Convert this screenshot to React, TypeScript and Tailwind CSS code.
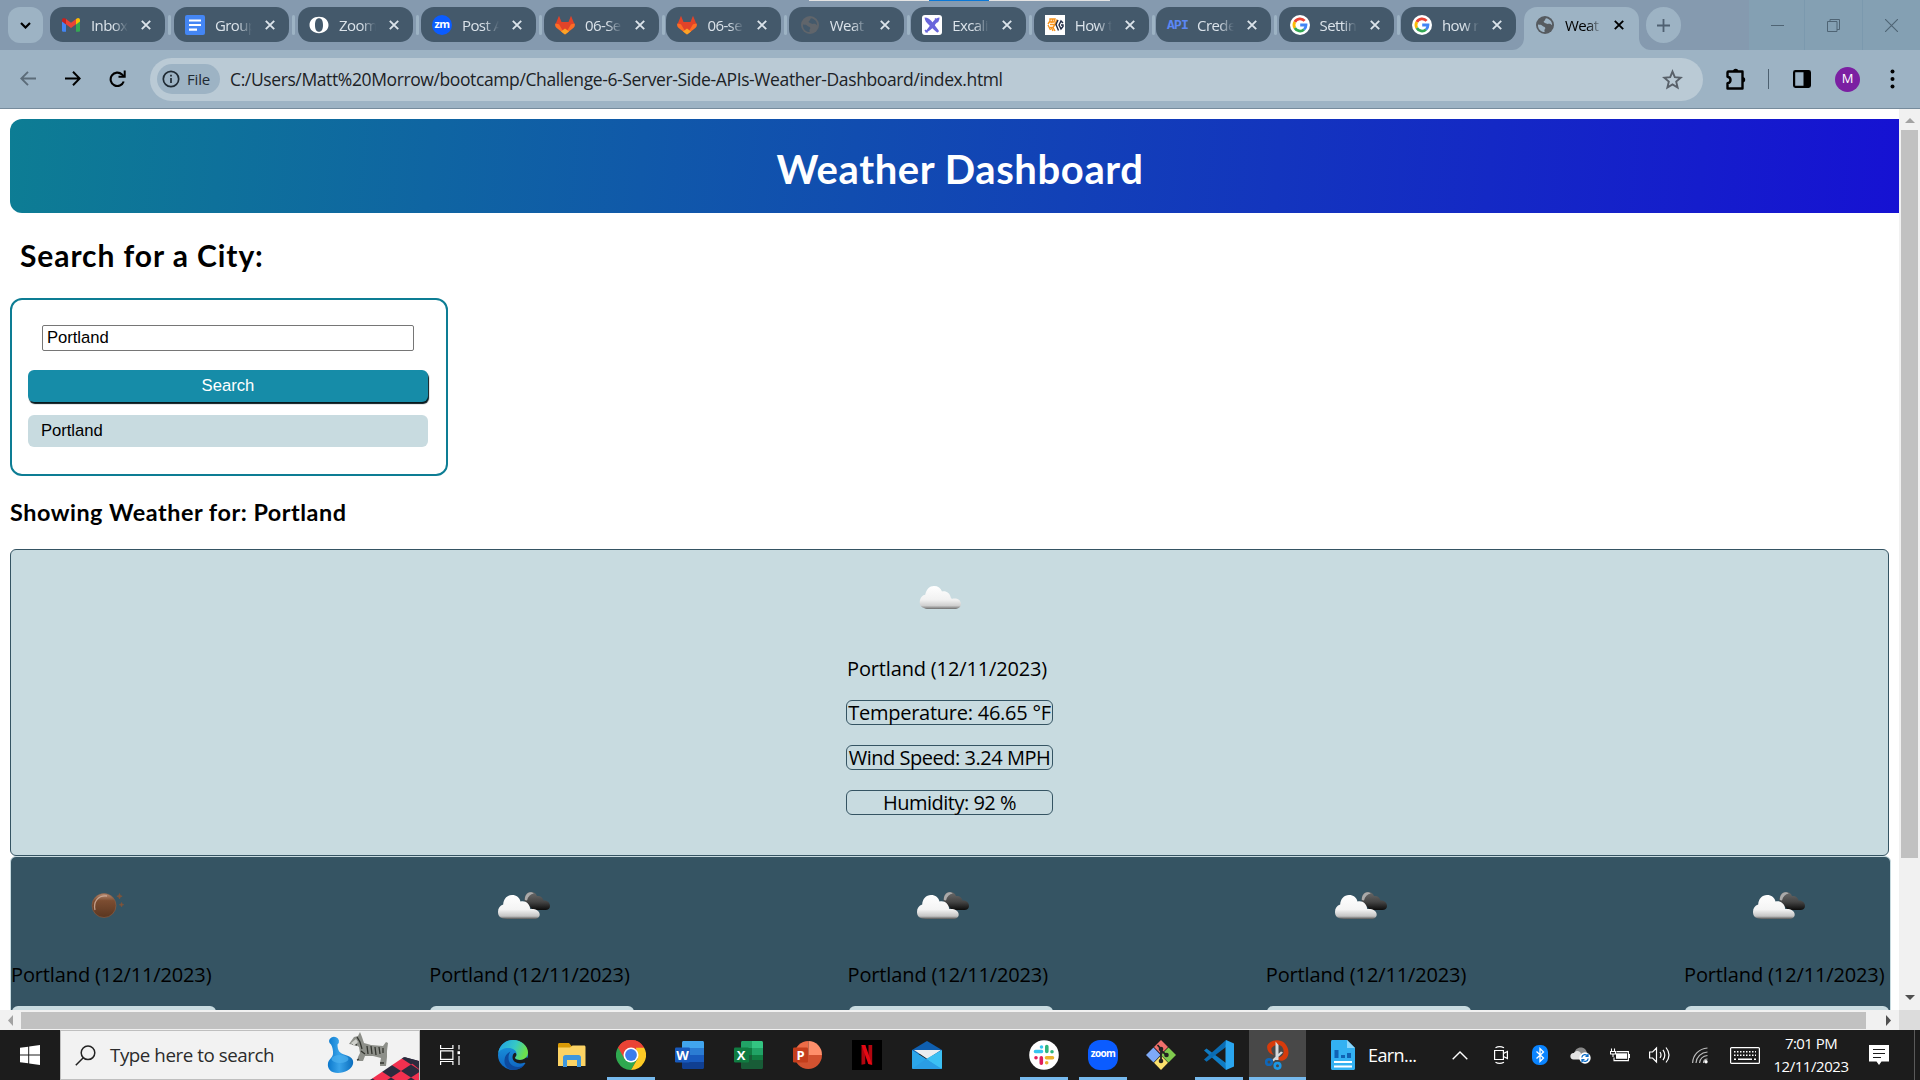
import React from "react";

type IconProps = { className?: string };

/* ---------- favicons ---------- */

const Gmail = () => (
  <svg className="size-5 shrink-0" viewBox="0 0 20 20">
    <path d="M1 5v10.500a1.200 1.200 0 0 0 1.200 1.200H5V8z" fill="#4285f4" />
    <path d="M15 8v8.700h2.800a1.200 1.200 0 0 0 1.200-1.200V5z" fill="#34a853" />
    <path d="M15 4.200V9.500l4-3V5c0-1.900-2-2.600-3.300-1.500z" fill="#fbbc04" />
    <path d="M5 9.300V4l5 3.800L15 4v5.300L10 13z" fill="#ea4335" />
    <path d="M1 5v1.500l4 3V4.100l-.7-.6C3 2.400 1 3.100 1 5z" fill="#c5221f" />
  </svg>
);

const Docs = () => (
  <svg className="size-5 shrink-0" viewBox="0 0 20 20">
    <rect width="20" height="20" rx="2" fill="#4486f4" />
    <path d="M4 5.500h12M4 10h12M4 14.700h8" stroke="#fff" strokeWidth="2.200" />
  </svg>
);

const BigO = () => (
  <svg className="size-5 shrink-0" viewBox="0 0 20 20">
    <path
      fillRule="evenodd"
      fill="#fff"
      d="M10 1.800c5.500 0 9.500 3.500 9.500 8.200s-4 8.200-9.500 8.200S.5 14.700.5 10s4-8.200 9.500-8.200zm0 1.400c-2.700 0-4 2.600-4 6.800s1.300 6.800 4 6.800 4-2.600 4-6.800-1.300-6.800-4-6.800z"
    />
  </svg>
);

const ZoomMail = () => (
  <span className="flex size-5 shrink-0 items-center justify-center rounded-full bg-[#0b5cff] pb-0.5 font-['Open_Sans',sans-serif] text-[11px] font-bold leading-none tracking-[-0.5px] text-white">
    zm
  </span>
);

const GitLab = () => (
  <svg className="size-5 shrink-0" viewBox="0 0 20 20">
    <path d="M4 .8 6.500 7h7L16 .8l3.500 8.500L10 19.500.5 9.300z" fill="#e24329" />
    <path d="M.3 8.500 4 9.300 10 19.400 2 13.300C.3 12-.2 10.300.3 8.500zM19.700 8.500 16 9.300 10 19.400l8-6.100c1.700-1.300 2.200-3 1.700-4.800z" fill="#fc6d26" />
    <path d="m10 19.600-4-3.100 4-3 4 3z" fill="#fca326" />
  </svg>
);

const Globe = ({ color, hole }: { color: string; hole: string }) => (
  <svg className="size-5 shrink-0" viewBox="0 0 20 20">
    <circle cx="10" cy="10" r="9" fill={color} />
    <path
      d="M11 3.200c-1.300.8-.4 2-1.600 2.600-1 .5-1 1.500.2 2 1.700.7 2.300 1.300 3.900 1 1.500-.3 2.600.2 3.600 1.500.3-3.300-2-6.400-6.100-7.100zM3 9.500c2 .2 3.600.3 4.600 1.500.8 1 2.500.6 2.700 2 .1 1-1 1.500-.9 2.600.1.700.2 1 .3 1.500C5.600 17 2.500 13.500 3 9.500z"
      fill={hole}
    />
  </svg>
);

const Excalidraw = () => (
  <svg className="size-5 shrink-0" viewBox="0 0 20 20">
    <rect width="20" height="20" rx="3" fill="#fff" />
    <path d="M2.500 2.500c3.500 0 5.500 1.500 8 4.800l6.200 8.200c.6 1-.9 2.500-1.900 1.800C11.500 14.500 9 12 6.500 9.500 4.500 7.500 2.800 5.500 2.500 2.500z" fill="#6965db" />
    <path d="M17.500 2.500c-3.800.2-6.500 4-8.500 6.900C7 12 5 14 2.800 17.500c4-.8 6.800-3 9-6 1.600-2.300 1.800-3 4-4.600 1.300-1 1.700-2.500 1.700-4.400z" fill="#6965db" />
    <path d="m3 15 2.500 2.500M13 3.500 16 7" stroke="#6965db" strokeWidth="1.500" />
  </svg>
);

const Hexagons = () => (
  <svg className="size-5 shrink-0" viewBox="0 0 20 20">
    <rect width="20" height="20" fill="#fff" />
    <g fill="none" strokeWidth="1.400">
      <path d="M5 4h5L9 7H5zM8 4l-1.500 4M12 4.500 10 9M3 9l2-3M3 10l2.500 5M5 9.500h5l-2 3H5M8 12.500 10 16M6 12l2 4" stroke="#f7941d" />
      <path d="m13 5-2 4.500 2.500 6M18 8l-2-2-2 4 2 4 2-2.500v-1.500h-2" stroke="#1f2a44" />
    </g>
  </svg>
);

const ApiMark = () => (
  <span className="flex size-5 shrink-0 items-center pt-0.5 font-['Liberation_Mono',monospace] text-[13px] font-bold leading-none tracking-[-0.9px] text-[#5b87f5]">
    API
  </span>
);

const Google = () => (
  <svg className="size-5 shrink-0" viewBox="0 0 20 20">
    <circle cx="10" cy="10" r="10" fill="#fff" />
    <g fill="none" strokeWidth="2.800">
      <path d="M14.600 5.900A6 6 0 0 0 4.800 7" stroke="#ea4335" />
      <path d="M4.800 7a6 6 0 0 0 0 6" stroke="#fbbc05" />
      <path d="M4.800 13a6 6 0 0 0 9.200 1.500" stroke="#34a853" />
      <path d="M14 14.500A6 6 0 0 0 16 10h-5.800" stroke="#4285f4" />
    </g>
  </svg>
);

const Close = ({ className }: IconProps) => (
  <svg className={className} viewBox="0 0 10 10">
    <path d="m.8.8 8.400 8.400M9.200.8.800 9.200" stroke="currentColor" strokeWidth="1.900" />
  </svg>
);

const tabs = [
  { title: "Inbox", icon: <Gmail />, w: "w-[124px]" },
  { title: "Group", icon: <Docs />, w: "w-[124px]" },
  { title: "Zoom", icon: <BigO />, w: "w-[123px]" },
  { title: "Post A", icon: <ZoomMail />, w: "w-[123px]" },
  { title: "06-Se", icon: <GitLab />, w: "w-[122.430px]" },
  { title: "06-se", icon: <GitLab />, w: "w-[122.430px]" },
  { title: "Weat", icon: <Globe color="#60656b" hole="#44596b" />, w: "w-[122.430px]" },
  { title: "Excali", icon: <Excalidraw />, w: "w-[122.430px]" },
  { title: "How t", icon: <Hexagons />, w: "w-[122.430px]" },
  { title: "Crede", icon: <ApiMark />, w: "w-[122.430px]" },
  { title: "Settin", icon: <Google />, w: "w-[122.430px]" },
  { title: "how r", icon: <Google />, w: "w-[123px]" },
];

const TabTitle = ({ children }: { children: React.ReactNode }) => (
  <span className="ml-2.5 w-[37px] shrink-0 overflow-hidden whitespace-nowrap text-[15px] leading-5 tracking-[-0.6px] [mask-image:linear-gradient(to_right,black_60%,transparent)]">
    {children}
  </span>
);

function TabStrip() {
  return (
    <div className="relative flex h-[50px] shrink-0 bg-[#859aaf]">
      <div className="absolute left-[809px] top-0 flex h-px w-[301px] bg-[#e4e4e4]">
        <div className="ml-[120px] w-[60px] bg-[#0a78d7]" />
      </div>
      <div className="ml-2 mt-[7px] flex h-9 w-[35px] items-center justify-center rounded-xl bg-[#9db3c4]">
        <svg className="h-[7px] w-[11px]" viewBox="0 0 11 7">
          <path d="m1 1 4.500 4.500L10 1" fill="none" stroke="#000" strokeWidth="2.200" />
        </svg>
      </div>
      <div className="ml-[7px] mt-[7px] flex h-[35px]">
        {tabs.map((t, i) => (
          <div key={i} className={"flex shrink-0 items-center " + t.w}>
            <div className="flex h-[35px] w-[115px] items-center rounded-[13px] bg-[#44596b] pl-[11px] text-[#dbe3ea]">
              {t.icon}
              <TabTitle>{t.title}</TabTitle>
              <Close className="ml-[13px] size-2.5 text-[#dbe3ea]" />
            </div>
            {i < 11 && <div className="ml-[3px] h-5 w-[3px] rounded-full bg-[#9db3c4]" />}
          </div>
        ))}
      </div>
      <div className="relative mt-[7px] flex h-[43px] w-[115px] rounded-t-[13px] bg-[#9db3c4] pl-[11px] pt-2 text-black">
        <svg className="absolute -left-3 bottom-0 size-3" viewBox="0 0 12 12">
          <path d="M12 0v12H0A12 12 0 0 0 12 0z" fill="#9db3c4" />
        </svg>
        <svg className="absolute -right-3 bottom-0 size-3" viewBox="0 0 12 12">
          <path d="M0 0v12h12A12 12 0 0 1 0 0z" fill="#9db3c4" />
        </svg>
        <Globe color="#565b60" hole="#9db3c4" />
        <TabTitle>Weat</TabTitle>
        <Close className="ml-3 mt-[5px] size-2.5" />
      </div>
      <div className="ml-[7px] mt-[7px] flex h-9 w-[35px] items-center justify-center rounded-full bg-[#9db3c4]">
        <svg className="size-[13px]" viewBox="0 0 13 13">
          <path d="M6.500 0v13M0 6.500h13" stroke="#4f6071" strokeWidth="1.800" />
        </svg>
      </div>
      <div className="ml-auto flex h-full w-[171px] bg-[#84a0b3] text-[#4f6474]">
        <div className="flex w-14 items-center justify-center border-r border-[#7b99ae]">
          <div className="ml-0.5 h-px w-[13px] bg-current" />
        </div>
        <div className="flex w-[58px] items-center justify-center border-r border-[#7b99ae]">
          <svg className="size-[13px]" viewBox="0 0 13 13">
            <path d="M.5 2.500h9.500v10H.500zM3 2.500V.5h9.500v10H10" fill="none" stroke="currentColor" />
          </svg>
        </div>
        <div className="flex flex-1 items-center justify-center">
          <svg className="size-[13px]" viewBox="0 0 13 13">
            <path d="m0 0 13 13M13 0 0 13" stroke="currentColor" strokeWidth="1.100" />
          </svg>
        </div>
      </div>
    </div>
  );
}

function Toolbar() {
  return (
    <div className="flex h-[59px] shrink-0 items-start border-b border-[#768b9c] bg-[#9db3c4] pt-2">
      <div className="flex h-[43px] w-[150px] items-center pb-0.5 pl-5">
        <svg className="h-[15px] w-4" viewBox="0 0 16 15">
          <path d="M16 7.500H1.500M8 .8 1.300 7.500 8 14.200" fill="none" stroke="#5c6c79" strokeWidth="1.900" />
        </svg>
        <svg className="ml-[29px] h-[15px] w-4" viewBox="0 0 16 15">
          <path d="M0 7.500h14.500M8 .8l6.700 6.700L8 14.200" fill="none" stroke="#000" strokeWidth="2" />
        </svg>
        <svg className="ml-7 h-[18px] w-[17px]" viewBox="0 0 17 18">
          <path d="M14.700 11.500A6.700 6.700 0 1 1 13 4.500l2 2" fill="none" stroke="#000" strokeWidth="2.100" />
          <path d="M16.700.5v7.200H9.500V5.700h5.200V.5z" fill="#000" />
        </svg>
      </div>
      <div className="flex h-[43px] w-[1553px] items-center rounded-full bg-[#bacad5] pb-px pl-[7px] pr-5">
        <div className="flex h-[30px] w-[63px] items-center rounded-full bg-[#9db3c4] pl-[5px]">
          <svg className="size-[18px]" viewBox="0 0 18 18">
            <circle cx="9" cy="9" r="7.700" fill="none" stroke="#1f2a33" strokeWidth="1.700" />
            <path d="M9 8v5M9 4.800v1.800" stroke="#1f2a33" strokeWidth="1.700" />
          </svg>
          <span className="ml-[7px] text-[15px] leading-5 tracking-[-0.2px] text-[#1f2a33]">File</span>
        </div>
        <span className="ml-2.5 whitespace-nowrap text-[17.500px] leading-6 tracking-[-0.385px] text-[#1c2226]">
          C:/Users/Matt%20Morrow/bootcamp/Challenge-6-Server-Side-APIs-Weather-Dashboard/index.html
        </span>
        <svg className="ml-auto size-[21px]" viewBox="0 0 21 21">
          <path
            d="m10.500 2.600 2.300 5.600 6 .5-4.600 3.900 1.400 5.900-5.100-3.100-5.100 3.100 1.400-5.900-4.600-3.900 6-.5z"
            fill="none"
            stroke="#59616a"
            strokeWidth="1.900"
          />
        </svg>
      </div>
      <div className="flex h-[43px] flex-1 items-center pb-px">
        <svg className="ml-[21px] h-[25px] w-6" viewBox="0 0 24 25">
          <path
            d="M4.500 4.500h14v17H3.500v-5.200c4-.6 4-6 0-6.500V5.500a1 1 0 0 1 1-1z"
            fill="none"
            stroke="#000"
            strokeWidth="2.400"
            strokeLinejoin="round"
          />
          <path d="M9 4.500a2.700 2.700 0 0 1 5.400 0zM18.500 10a2.700 2.700 0 0 1 0 5.400z" fill="#000" />
        </svg>
        <div className="ml-5 h-5 w-px bg-[#4c6070]" />
        <svg className="ml-6 h-[18px] w-[18px]" viewBox="0 0 18 18">
          <rect x="1.100" y="1.100" width="15.800" height="15.800" rx="1.300" fill="none" stroke="#000" strokeWidth="2.200" />
          <path d="M10.500 1h6.500v16h-6.500z" fill="#000" />
        </svg>
        <div className="ml-6 flex size-[25px] items-center justify-center rounded-full bg-[#7b1fa2] text-[13px] font-normal text-white">
          M
        </div>
        <svg className="ml-[30px] h-[22px] w-[5px]" viewBox="0 0 5 22">
          <g fill="#000">
            <circle cx="2.500" cy="3.500" r="2" />
            <circle cx="2.500" cy="11" r="2" />
            <circle cx="2.500" cy="18.500" r="2" />
          </g>
        </svg>
      </div>
    </div>
  );
}

/* ---------- weather icons ---------- */

const OvercastLight = () => (
  <svg className="h-[62px] w-[62px]" viewBox="0 0 62 62">
    <defs>
      <linearGradient id="ovl" x1="0" y1="0" x2="0" y2="1">
        <stop offset="0" stopColor="#fff" />
        <stop offset=".6" stopColor="#f1f1f1" />
        <stop offset=".85" stopColor="#cfcfcf" />
        <stop offset="1" stopColor="#6f6f6f" />
      </linearGradient>
    </defs>
    <path
      d="M15 42c-3.500-1-5-4-4-8 .8-3 2.500-4.800 5.200-5.300C17.500 23 20.500 20 25 20c4 0 6.800 2 8 5.500 4-1 8 1.500 8.700 6 .5.200.8.800 1 1.500 4.500-1.500 8.800.5 9.300 4.500 0 2.500-1 4-3.500 5-1 .5-2 .5-3 .5H18c-1 0-2-.5-3-1z"
      fill="url(#ovl)"
    />
  </svg>
);

const BrokenClouds = () => (
  <svg className="h-[62px] w-[62px]" viewBox="0 0 62 62">
    <defs>
      <linearGradient id="bkf" x1="0" y1="0" x2="0" y2="1">
        <stop offset="0" stopColor="#fff" />
        <stop offset=".6" stopColor="#f4f4f4" />
        <stop offset=".88" stopColor="#c4c4c4" />
        <stop offset="1" stopColor="#555" />
      </linearGradient>
      <linearGradient id="bkb" x1="0" y1="0" x2="0" y2="1">
        <stop offset="0" stopColor="#6a6a6a" />
        <stop offset=".55" stopColor="#454545" />
        <stop offset="1" stopColor="#0c0c0c" />
      </linearGradient>
    </defs>
    <path
      d="M31.500 26c-.3-5 2-9 6.500-9 3 0 5 1.500 6 4 3-.6 6 1.500 6.500 4.500 3.500-.5 6.500 2 6.500 5.500 0 2.500-2 4-4.500 4H40z"
      fill="url(#bkb)"
    />
    <path d="M31.800 25c0-4 2-7.500 5.500-7.700 1.500 0 2.500.5 3.500 1.200-3.500.5-5.800 3-6.800 7z" fill="#aaa" />
    <path
      d="M10 43.500c-3.500-.8-5-3.500-5-6.500 0-4 2-6.500 5.200-7.500C10.500 24 14 20 19 20c4.500 0 7.500 2.500 8.500 6.500 5-1.500 9.500 2.500 9.700 7.500 5-.5 9.500 1.500 9.500 5.500 0 2-1 3.400-3.200 4.200-1.500.5-2.500.3-4 .3H14c-1.500 0-2.500-.2-4-.5z"
      fill="url(#bkf)"
    />
  </svg>
);

const ClearNight = () => (
  <svg className="h-[62px] w-[62px]" viewBox="0 0 62 62">
    <defs>
      <linearGradient id="cln" x1="0" y1="0" x2="0" y2="1">
        <stop offset="0" stopColor="#b98d74" />
        <stop offset=".3" stopColor="#7c4d31" />
        <stop offset="1" stopColor="#5a3620" />
      </linearGradient>
    </defs>
    <circle cx="29" cy="30.500" r="12" fill="url(#cln)" stroke="#8f6044" strokeWidth=".6" />
    <path d="M20 35c-2-8 3-15 12-14" fill="none" stroke="#d3b3a1" strokeWidth="1.300" opacity=".8" />
    <path d="m44.500 18.500.8 1.900 1.900.8-1.900.8-.8 1.900-.8-1.900-1.900-.8 1.900-.8zM46.500 27.500l.6 1.600 1.600.6-1.600.6-.6 1.600-.6-1.600-1.600-.6 1.600-.6z" fill="#80543a" stroke="#80543a" strokeWidth=".6" />
  </svg>
);

const forecast = [<ClearNight />, <BrokenClouds />, <BrokenClouds />, <BrokenClouds />, <BrokenClouds />];

const Reading = ({ children }: { children: React.ReactNode }) => (
  <div className="mb-5 flex h-[25px] items-center justify-center whitespace-nowrap rounded-md border border-[#355463] leading-6">
    {children}
  </div>
);

function Dashboard() {
  return (
    <div className="flex min-h-0 flex-1 flex-col overflow-hidden bg-white pl-2.5 font-['Open_Sans',sans-serif] text-xl text-black">
      <header className="mt-2.5 flex h-[94px] w-[1900px] shrink-0 items-center justify-center rounded-xl bg-[linear-gradient(95deg,#0d7d94,#1611d3)] pt-1.5">
        <h1 className="font-['Lato',sans-serif] text-[40px] font-bold leading-[50px] tracking-[0.6px] text-white">
          Weather Dashboard
        </h1>
      </header>
      <h2 className="ml-2.5 mt-6 shrink-0 font-['Lato',sans-serif] text-[30px] font-bold leading-9 tracking-[0.92px]">
        Search for a City:
      </h2>
      <section className="mt-[25px] h-[178px] w-[438px] shrink-0 rounded-xl border-2 border-[#0d7d94] px-4 pt-[25px] font-['Liberation_Sans',Arial,sans-serif] text-[16.670px]">
        <div className="ml-3.5 flex h-[26px] w-[372px] items-center rounded-xs border border-[#767676] pl-1 leading-5 tracking-[-0.05px]">
          Portland
        </div>
        <button className="mt-[19px] block h-8 w-[400px] rounded-md bg-[#168ca8] leading-8 text-white shadow-[1px_2px_1px_#07181c]">
          Search
        </button>
        <div className="mt-[13px] h-8 w-[400px] rounded-md bg-[#c8dbe0] pl-[13px] leading-[31px] tracking-[-0.05px]">Portland</div>
      </section>
      <h3 className="mt-[21px] shrink-0 font-['Lato',sans-serif] text-[23.400px] font-bold leading-[30px] tracking-[0.52px]">
        Showing Weather for: Portland
      </h3>
      <section className="mt-[22px] flex h-[307px] w-[1879px] shrink-0 justify-center rounded-md border border-[#355463] bg-[#c8dbe0]">
        <div className="w-[207px] pt-4">
          <div className="flex w-[188px] justify-center">
            <OvercastLight />
          </div>
          <p className="mb-[19px] ml-px mt-[29px] whitespace-nowrap leading-6 tracking-[-0.15px]">Portland (12/11/2023)</p>
          <Reading>
            <span className="tracking-[-0.25px]">Temperature: 46.65 °F</span>
          </Reading>
          <Reading>
            <span className="tracking-[-0.48px]">Wind Speed: 3.24 MPH</span>
          </Reading>
          <Reading>
            <span className="tracking-[-0.5px]">Humidity: 92 %</span>
          </Reading>
        </div>
      </section>
      <section className="flex h-[400px] w-[1881px] shrink-0 justify-between rounded-md border border-[#c8dbe0] bg-[#355463]">
        {forecast.map((icon, i) => (
          <div key={i} className="w-[206px] pt-[18px]">
            <div className="flex w-[190px] justify-center">{icon}</div>
            <p className="mb-[19px] mt-[26px] whitespace-nowrap leading-6 tracking-[-0.13px]">Portland (12/11/2023)</p>
            <div className="ml-px h-6 w-[204px] rounded-md bg-[#c8dbe0]" />
          </div>
        ))}
      </section>
    </div>
  );
}

const Arrow = ({ className, d, fill }: { className: string; d: string; fill: string }) => (
  <svg className={className} viewBox="0 0 10 10" preserveAspectRatio="none">
    <path d={d} fill={fill} />
  </svg>
);

/* ---------- taskbar icons ---------- */

const Windows = () => (
  <svg className="size-5" viewBox="0 0 20 20">
    <path d="M0 2.800 8.200 1.700v7.800H0zM9.200 1.500 20 0v9.500H9.200zM0 10.500h8.200v7.800L0 17.200zM9.200 10.500H20V20L9.200 18.500z" fill="#fff" />
  </svg>
);

const Edge = () => (
  <svg className="size-[30px]" viewBox="0 0 30 30">
    <defs>
      <linearGradient id="eg1" x1="0" y1="0" x2="1" y2=".3">
        <stop offset="0" stopColor="#1f9fe8" />
        <stop offset=".6" stopColor="#36c8c6" />
        <stop offset="1" stopColor="#6be04d" />
      </linearGradient>
      <linearGradient id="eg2" x1="0" y1="0" x2="0" y2="1">
        <stop offset="0" stopColor="#1b9de2" />
        <stop offset="1" stopColor="#0f62c0" />
      </linearGradient>
      <clipPath id="egc">
        <path d="M0 0h30v17.500l-1.500.5c-1.500 1.500-3.500 2.300-6.500 2l6 3.500-6 6.500H0z" />
      </clipPath>
    </defs>
    <circle cx="15" cy="15" r="15" fill="url(#eg2)" clipPath="url(#egc)" />
    <path d="M.3 13C1.500 5 7.500 0 15 0c8.500 0 15 6 15 12.500 0 4.500-3.500 7.500-8 7.500-3.500 0-5-1.200-5-2.200 0-.8 1.500-1.500 1.500-4C18.500 10.500 15 8 10.500 8 5.500 8 1.800 10 .3 13z" fill="url(#eg1)" />
    <path d="M10.500 18c0 5.500 4.500 9.500 10 9 2.500-.2 5-1.500 6.500-3-2.500 4-7 6.200-12 6C9 29.500 6 25 6.500 20c.3-4 2.500-7 6-8.500-1.200 1.500-2 3.500-2 6.500z" fill="#0d4a9e" />
    <path d="M16.900 17.800c0 1 1.600 2.200 5.100 2.200 3 0 5.300-1.200 6.700-3.200-.3 3-1.200 4.700-2.200 5.700-6 2.500-12-.5-12-5.200 0-2.200 1-4 2.700-4.500.9.500 1.200 1.200 1.200 2.200 0 1.300-1.500 2-1.500 2.800z" fill="#1c1c1c" />
  </svg>
);

const Folder = () => (
  <svg className="h-[25px] w-7" viewBox="0 0 28 25">
    <path d="M0 1.500C0 .7.500 0 1.500 0H11l3 3.500V8H0z" fill="#d99a06" />
    <path d="M0 4.500h12l2.500-2H26c1 0 1.500.6 1.500 1.500V23H0z" fill="#fcd364" />
    <path d="M5 24V14.500C5 13 6 12 7.500 12h13c1.500 0 2.500 1 2.500 2.500V24h-4v-7H9v7z" fill="#3f97dd" />
  </svg>
);

const Chrome = () => (
  <svg className="size-[30px]" viewBox="0 0 30 30">
    <path d="M15 15 2 7.500a15 15 0 0 1 26 0z" fill="#ea4335" />
    <path d="M2 7.500a15 15 0 0 0 13 22.500l6.500-11.300L15 15z" fill="#2fa84f" />
    <path d="M28 7.500a15 15 0 0 1-13 22.500l6.500-11.200L20 7.500z" fill="#fdca25" />
    <path d="M2 7.500 8.500 18.700 15 7.500h13A15 15 0 0 0 2 7.500z" fill="#ea4335" />
    <circle cx="15" cy="15" r="7.500" fill="#fff" />
    <circle cx="15" cy="15" r="5.900" fill="#3b7ded" />
  </svg>
);

const OfficeLetter = ({ children }: { children: string }) => (
  <span className="relative font-['Open_Sans',sans-serif] text-[13px] font-bold leading-none text-white">{children}</span>
);

const Word = () => (
  <div className="relative flex h-7 w-[29px] items-center">
    <svg className="absolute inset-0 size-full" viewBox="0 0 29 28">
      <path d="M7 1.500C7 .6 7.600 0 8.500 0h19c.9 0 1.500.6 1.500 1.500V7H7z" fill="#41a5ee" />
      <path d="M7 7h22v7H7z" fill="#2b7cd3" />
      <path d="M7 14h22v7H7z" fill="#185abd" />
      <path d="M7 21h22v5.500c0 .9-.6 1.500-1.500 1.500h-19c-.9 0-1.500-.6-1.500-1.500z" fill="#103f91" />
      <rect y="6.500" width="15" height="15" rx="1.300" fill="#185abd" />
    </svg>
    <div className="flex w-[15px] justify-center">
      <OfficeLetter>W</OfficeLetter>
    </div>
  </div>
);

const Excel = () => (
  <div className="relative flex h-7 w-[29px] items-center">
    <svg className="absolute inset-0 size-full" viewBox="0 0 29 28">
      <path d="M7 1.500C7 .6 7.600 0 8.500 0H18v7H7z" fill="#21a366" />
      <path d="M18 0h9.500c.9 0 1.500.6 1.500 1.500V7H18z" fill="#33c481" />
      <path d="M7 7h11v7H7z" fill="#107c41" />
      <path d="M18 7h11v7H18z" fill="#21a366" />
      <path d="M18 14h11v5H18z" fill="#107c41" />
      <path d="M7 14h11v5h11v7.500c0 .9-.6 1.500-1.500 1.500h-19c-.9 0-1.500-.6-1.500-1.500z" fill="#185c37" />
      <rect y="6.500" width="15" height="15" rx="1.300" fill="#107c41" />
    </svg>
    <div className="flex w-[15px] justify-center">
      <OfficeLetter>X</OfficeLetter>
    </div>
  </div>
);

const PowerPoint = () => (
  <div className="relative flex h-7 w-[29px] items-center">
    <svg className="absolute inset-0 size-full" viewBox="0 0 29 28">
      <path d="M15.500 0A14 14 0 0 0 1.500 14h14z" fill="#ed6c47" />
      <path d="M15.500 0A13.500 14 0 0 1 29 14H15.500z" fill="#ff8f6b" />
      <path d="M1.500 14a13.750 14 0 0 0 27.500 0z" fill="#d35230" />
      <rect y="6.500" width="15" height="15" rx="1.300" fill="#c43e1c" />
    </svg>
    <div className="flex w-[15px] justify-center">
      <OfficeLetter>P</OfficeLetter>
    </div>
  </div>
);

const Netflix = () => (
  <svg className="size-[30px]" viewBox="0 0 30 30">
    <rect width="30" height="30" fill="#000" />
    <path d="M9.500 5h3.800v19l-3.800.7zM16.500 5h3.700v19.700l-3.700-.7z" fill="#b1060f" />
    <path d="M9.500 5h3.800l6.900 19.700-3.900-.7z" fill="#e50914" />
  </svg>
);

const Mail = () => (
  <svg className="mb-px h-7 w-[30px]" viewBox="0 0 30 28">
    <path d="M0 9 15 0l15 9v4H0z" fill="#0f5fb0" />
    <path d="M2 9h27L15.500 18z" fill="#eceef0" />
    <path d="M0 9 30 28H1.500C.6 28 0 27.500 0 26.500z" fill="#2ba6ea" />
    <path d="M30 9v17.500c0 1-.6 1.500-1.500 1.500L14 18z" fill="#3cc0f3" />
    <path d="M0 28 14 18l16 10z" fill="#2a9de4" />
  </svg>
);

const Slack = () => (
  <svg className="size-[30px]" viewBox="0 0 30 30">
    <circle cx="15" cy="15" r="14.800" fill="#fff" />
    <g strokeWidth="3.600" strokeLinecap="round">
      <path d="M12.500 7v0M12.500 11.500H6.500" stroke="#36c5f0" />
      <path d="M17.800 6.500v5M23 11.700v0" stroke="#2eb67d" />
      <path d="M17.500 17.700h6M17.700 22.800v0" stroke="#ecb22e" />
      <path d="M12.300 17.700v5.500M7 17.700v0" stroke="#e01e5a" />
    </g>
  </svg>
);

const Zoom = () => (
  <div className="flex size-[30px] items-center justify-center rounded-[12px] bg-[#0b5cff] pb-1 font-['Open_Sans',sans-serif] text-[10px] font-bold leading-none tracking-[-0.6px] text-white">
    zoom
  </div>
);

const Git = () => (
  <svg className="size-[30px]" viewBox="0 0 30 30">
    <path d="m15 0 7 7-7 7-7-7z" fill="#f0706c" />
    <path d="m7.500 7.500 7 7.500-7 7.500L0 15z" fill="#7eaaf7" />
    <path d="m22.500 7.500 7.500 7.500-7.500 7.500L15 15z" fill="#80cb4e" />
    <path d="m15 15.500 7 7.200L15 30l-7-7.300z" fill="#fbe06c" />
    <path d="M11.500 5 15 9v12M15 10.500l5.500 4.500" fill="none" stroke="#222" strokeWidth="1.800" />
    <g fill="#222">
      <circle cx="15" cy="9" r="2.300" />
      <circle cx="20.500" cy="15" r="2.300" />
      <circle cx="15" cy="21" r="2.300" />
    </g>
  </svg>
);

const VsCode = () => (
  <svg className="size-[30px]" viewBox="0 0 30 30">
    <path d="m0 10.500 2.500-2L22 23v7z" fill="#0f7cc4" />
    <path d="m0 19.500 2.500 2.200L22 7V0z" fill="#0a6cb3" />
    <path d="m22 0 8 3.500v23L22 30l-.5-6V6z" fill="#2aa6f0" />
  </svg>
);

const Snip = () => (
  <svg className="h-[30px] w-[25px]" viewBox="0 0 25 30">
    <path d="M2.500 5C6-.5 15-1.500 19.500 3c6 6 5 15.500-1.500 17.500-3 1-5.500-1-6-3.500 5 1 8-4 6-8.500C16 4 11 3.500 6.500 8 6 11 7 13 9 15 4 14 1 9 2.500 5z" fill="#d73b0b" />
    <path d="M10.500 1.500 13.500 5v15h-3zM18 12.500l-9.500 9-1-2 8.500-8z" fill="#d6d9dc" />
    <g fill="none" strokeWidth="2.600">
      <circle cx="4" cy="22" r="2.800" stroke="#0f66b8" />
      <circle cx="12.500" cy="25.800" r="2.800" stroke="#1b97e6" />
    </g>
  </svg>
);

const TaskView = () => (
  <svg className="size-5" viewBox="0 0 20 20">
    <path d="M.6 0v3.500h12.300V0M.6 20v-3.500h12.300V20M.6 5.800h12.300v8.500H.6zM19 0v4.500M19 11v9" fill="none" stroke="#fff" strokeWidth="1.200" />
    <path d="M17.500 6.200h3v3h-3z" fill="#fff" />
  </svg>
);

const NewsDoc = () => (
  <svg className="h-[30px] w-6" viewBox="0 0 24 30">
    <path d="M0 1.500C0 .6.600 0 1.500 0H16l8 8v20.500c0 .9-.6 1.500-1.500 1.500h-21C.6 30 0 29.400 0 28.500z" fill="#33b1f2" />
    <path d="M16 0l8 8h-8z" fill="#8bd6fb" />
    <path d="M3.500 10h4v8h-4zM10 15h4v3h-4zM16 13h4v5h-4z" fill="#0f63b4" />
    <path d="M3 22h18M3 26.500h18" stroke="#fff" strokeWidth="2" />
  </svg>
);

const GameArt = () => (
  <svg className="h-[49px] w-[95px]" viewBox="0 0 95 49">
    <defs>
      <linearGradient id="pawn" x1="0" y1="0" x2="1" y2="0">
        <stop offset="0" stopColor="#0b78cc" />
        <stop offset=".45" stopColor="#3aa4ea" />
        <stop offset="1" stopColor="#0a6dbd" />
      </linearGradient>
      <pattern id="board" width="20" height="13" patternUnits="userSpaceOnUse" patternTransform="translate(7 1)">
        <path d="M0 0h20v13H0z" fill="#2b2a3d" />
        <path d="M10 0 20 6.500 10 13 0 6.500z" fill="#f2304f" />
      </pattern>
    </defs>
    <path d="M46 49 80 26l15 4v19z" fill="url(#board)" />
    <path d="m80 26 15 4v8z" fill="#2b2a3d" />
    <path d="M5 10a5 4.500 0 1 1 8.500 3.500c0 6 2 9 8 10.500 6 1.500 8.500 5 7.500 9-1.500 5.500-8 9-15 9S3 38 4 32c.8-4 4.500-5 5-9 .3-3-.5-7-2-9.500A4.500 4.500 0 0 1 5 10z" fill="url(#pawn)" />
    <ellipse cx="16" cy="28" rx="8.500" ry="4" fill="#4cb0ef" opacity=".7" />
    <path d="m25 13 5-7 4-1 2-4 2 5 2 6 7 2 12 1 3-4 2 1-1 8v6l-1 9h-6v-3l1-5-8-2-8 0-2 5h-6l1-4 2-4-1-6-3-2z" fill="#8d8f89" />
    <path d="m33 6 3 5 2 7M43 15l1 8M47 15l1 8M51 16l1 8M55 16l1 7M59 17v5M28 13l5 1M56 32h4M35 28l-2 1M37 20l4 3" stroke="#33352f" strokeWidth="1.300" fill="none" />
    <path d="m27 12 5-4 2 3-4 4z" fill="#cfd0cb" />
  </svg>
);

const AppSlot = ({ className, bar, children }: { className: string; bar?: string; children: React.ReactNode }) => (
  <div className={"flex h-full shrink-0 flex-col items-center " + className}>
    <div className="flex h-[50px] shrink-0 items-center justify-center">{children}</div>
    {bar && <div className={"-mt-[3px] h-[3px] shrink-0 bg-[#76b9ed] " + bar} />}
  </div>
);

function Taskbar() {
  return (
    <div className="flex h-[50px] shrink-0 items-stretch overflow-hidden bg-[#1c1c1c] text-white">
      <div className="flex w-[60px] items-center justify-center">
        <Windows />
      </div>
      <div className="flex w-[360px] items-center border border-[#bfbfbf] bg-[#f2f2f2] pl-3.5">
        <svg className="size-[21px]" viewBox="0 0 21 21">
          <circle cx="13" cy="7.800" r="6.800" fill="none" stroke="#222" strokeWidth="1.500" />
          <path d="m8.300 12.800-7.500 7.500" stroke="#222" strokeWidth="1.500" />
        </svg>
        <span className="ml-3.5 whitespace-nowrap text-[18.750px] leading-6 tracking-[-0.45px] text-[#2b2b2b]">Type here to search</span>
        <div className="ml-auto self-start">
          <GameArt />
        </div>
      </div>
      <AppSlot className="w-[60px]"><TaskView /></AppSlot>
      <AppSlot className="ml-[3px] w-[60px]"><Edge /></AppSlot>
      <AppSlot className="w-[58px]"><Folder /></AppSlot>
      <AppSlot className="w-[60px]" bar="w-12"><Chrome /></AppSlot>
      <AppSlot className="w-[57px]"><Word /></AppSlot>
      <AppSlot className="w-[60px]"><Excel /></AppSlot>
      <AppSlot className="w-[59px]"><PowerPoint /></AppSlot>
      <AppSlot className="w-[60px]"><Netflix /></AppSlot>
      <AppSlot className="w-[59px]"><Mail /></AppSlot>
      <AppSlot className="ml-[58px] w-[60px]" bar="w-12"><Slack /></AppSlot>
      <AppSlot className="w-[58px]" bar="w-12"><Zoom /></AppSlot>
      <AppSlot className="w-[58px]"><Git /></AppSlot>
      <AppSlot className="w-[58px]" bar="w-12"><VsCode /></AppSlot>
      <AppSlot className="ml-px w-[57px] bg-[#484848]" bar="w-full"><Snip /></AppSlot>
      <div className="ml-[25px] flex items-center">
        <NewsDoc />
        <span className="ml-[13px] w-[84px] text-[18px] leading-6 tracking-[-0.6px]">Earn...</span>
        <svg className="h-[9px] w-4" viewBox="0 0 16 9">
          <path d="m.7 8.300 7.300-7.300 7.300 7.300" fill="none" stroke="#fff" strokeWidth="1.400" />
        </svg>
        <svg className="ml-[26px] h-[18px] w-[14px]" viewBox="0 0 14 18">
          <path d="M.6 4.500h8.800v9H.6zM9.400 7.500l4-2v7l-4-2M1.500 1.800Q5.500-.5 10 1.800M1.500 16.200q4 2.300 8.500 0" fill="none" stroke="#fff" strokeWidth="1.200" />
        </svg>
        <svg className="ml-6 h-5 w-4" viewBox="0 0 16 20">
          <rect width="16" height="20" rx="7" fill="#0a84ff" />
          <path d="m4.500 6.500 7 6.500L8 16.500v-13L11.500 7l-7 6.500" fill="none" stroke="#fff" strokeWidth="1.300" />
        </svg>
        <svg className="ml-[22px] h-[18px] w-[21px]" viewBox="0 0 21 18">
          <path d="M4 8c1-5 4-7 8-6.500 3 .5 4.500 3 5 5.500L12 13H4z" fill="#8a8a8a" />
          <path d="M3.500 13.500C-1 13-.5 6.500 4 7c2-3 6-2.500 7 .5l-1 6z" fill="#e3e3e3" />
          <circle cx="15" cy="12" r="5.700" fill="#fff" />
          <path d="M11.800 11.500a3.300 3.300 0 0 1 6-1.500M18.200 12.500a3.300 3.300 0 0 1-6 1.500M18 7.800v2.500h-2.500M12 16.200v-2.500h2.500" fill="none" stroke="#0b6cc7" strokeWidth="1.300" />
        </svg>
        <svg className="ml-[19px] h-[15px] w-5" viewBox="0 0 20 15">
          <path d="M1.500.5v2.500M4.500.5v2.500M.5 3.500h5V6H.5zM3 6v3M6.500 3.600h11.900v9H4V9.500M18.500 6.500h1v3h-1" fill="none" stroke="#fff" strokeWidth="1.100" />
          <path d="M6 5.300h11v5.500H6z" fill="#fff" />
        </svg>
        <svg className="ml-[19px] h-[18px] w-[22px]" viewBox="0 0 22 18">
          <path d="M.6 6h3L7.500 2v14l-3.900-4h-3zM11 6q2 3 0 6M14 3.800q3.600 5.200 0 10.400M17 1.500q6 7.500 0 15" fill="none" stroke="#fff" strokeWidth="1.200" />
        </svg>
        <svg className="ml-[21px] h-[17px] w-4" viewBox="0 0 16 17">
          <path d="M.6 16C1 8 7 1.500 15.500 1M4 16C4.500 10 9 5.500 15.500 5M7.500 16c.5-4 3.500-7 8-7.500" fill="none" stroke="#bdbdbd" strokeWidth="1.200" />
          <path d="M11.500 16c0-2.500 1.500-4 4-4" fill="none" stroke="#bdbdbd" strokeWidth="1.200" />
          <circle cx="14" cy="14.700" r="1.700" fill="#fff" />
        </svg>
        <svg className="ml-[22px] h-[17px] w-[30px]" viewBox="0 0 30 17">
          <rect x=".6" y=".6" width="28.800" height="15.800" rx="1" fill="none" stroke="#fff" strokeWidth="1.200" />
          <path d="M4 4.800h22M4 8.300h22" stroke="#fff" strokeWidth="1.400" strokeDasharray="1.500 1.500" />
          <path d="M4 12.200h2M8 12.200h14M24 12.200h2" stroke="#fff" strokeWidth="1.400" />
        </svg>
      </div>
      <div className="ml-2.5 flex w-[82px] flex-col items-center text-[15px] leading-[23px]">
        <span className="mt-0.5 tracking-[-0.55px]">7:01 PM</span>
        <span className="tracking-[-0.46px]">12/11/2023</span>
      </div>
      <svg className="ml-[17px] mt-[15px] size-5" viewBox="0 0 20 20">
        <path d="M0 0h20v16.500h-7.500L10 20l-2.500-3.500H0z" fill="#fff" />
        <path d="M4 4.500h12M4 8.500h12M4 12.500h8" stroke="#1c1c1c" strokeWidth="1.200" />
      </svg>
      <div className="ml-auto mr-[5px] w-px bg-[#5a5a5a]" />
    </div>
  );
}

export default function App() {
  return (
    <div className="flex h-[1080px] w-[1920px] flex-col overflow-hidden font-['Open_Sans',sans-serif]">
      <TabStrip />
      <Toolbar />
      <div className="flex min-h-0 flex-1">
        <div className="flex w-[1899px] flex-col overflow-hidden">
          <Dashboard />
          <div className="flex h-5 shrink-0 items-center bg-[#f1f1f1]">
            <div className="flex w-[21px] justify-center">
              <Arrow className="h-[11px] w-[5px]" d="M10 0v10L0 5z" fill="#a3a3a3" />
            </div>
            <div className="h-[17px] w-[1845px] bg-[#c1c1c1]" />
            <div className="ml-5 flex">
              <Arrow className="h-[11px] w-[5px]" d="M0 0v10l10-5z" fill="#505050" />
            </div>
          </div>
        </div>
        <div className="flex flex-1 flex-col">
          <div className="flex flex-1 flex-col items-center bg-[#f1f1f1]">
            <Arrow className="mt-[9px] h-[5px] w-[10px]" d="M0 10h10L5 0z" fill="#a3a3a3" />
            <div className="mt-[7px] h-[728px] w-[17px] bg-[#c1c1c1]" />
            <Arrow className="mb-2.5 mt-auto h-[5px] w-[10px]" d="M0 0h10L5 10z" fill="#505050" />
          </div>
          <div className="h-5 bg-[#dcdcdc]" />
        </div>
      </div>
      <Taskbar />
    </div>
  );
}
